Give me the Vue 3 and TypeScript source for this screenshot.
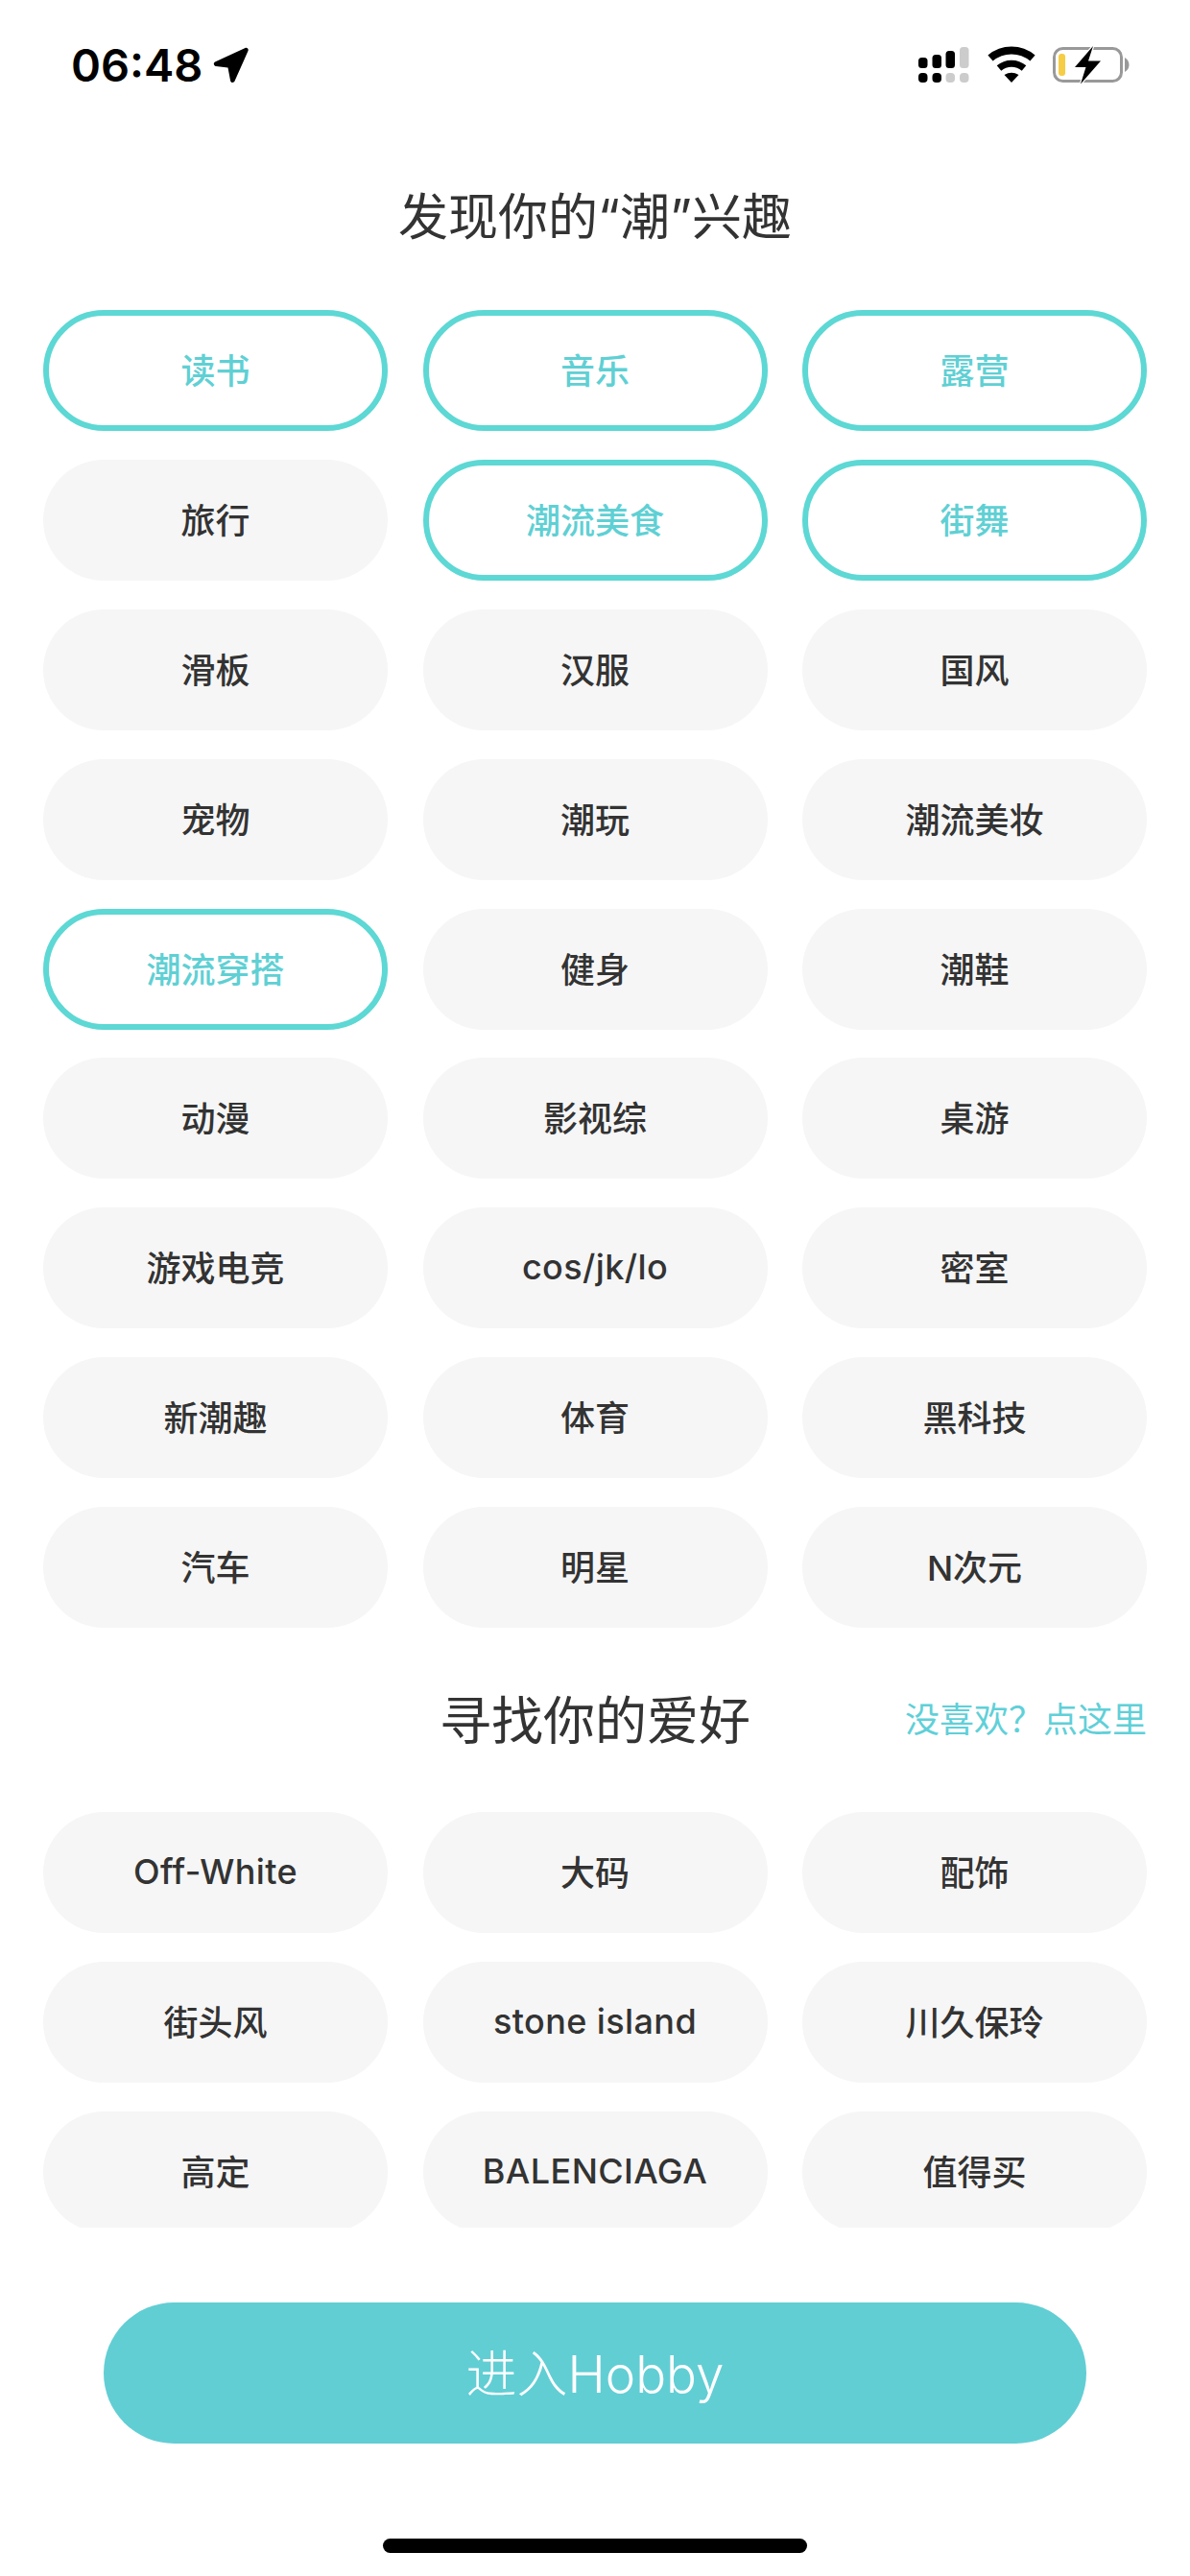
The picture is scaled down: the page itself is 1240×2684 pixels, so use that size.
<script setup lang="ts">
interface Tag {
  label: string
  on?: boolean
  latin?: boolean
}

const interests: Tag[] = [
  { label: '读书', on: true }, { label: '音乐', on: true }, { label: '露营', on: true },
  { label: '旅行' }, { label: '潮流美食', on: true }, { label: '街舞', on: true },
  { label: '滑板' }, { label: '汉服' }, { label: '国风' },
  { label: '宠物' }, { label: '潮玩' }, { label: '潮流美妆' },
  { label: '潮流穿搭', on: true }, { label: '健身' }, { label: '潮鞋' },
  { label: '动漫' }, { label: '影视综' }, { label: '桌游' },
  { label: '游戏电竞' }, { label: 'cos/jk/lo', latin: true }, { label: '密室' },
  { label: '新潮趣' }, { label: '体育' }, { label: '黑科技' },
  { label: '汽车' }, { label: '明星' }, { label: 'N次元' },
]

const hobbies: Tag[] = [
  { label: 'Off-White', latin: true }, { label: '大码' }, { label: '配饰' },
  { label: '街头风' }, { label: 'stone island', latin: true }, { label: '川久保玲' },
  { label: '高定' }, { label: 'BALENCIAGA', latin: true }, { label: '值得买' },
]
</script>

<template>
  <div class="page">
    <header class="status">
      <div class="clock">
        <span class="time">06:48</span>
        <svg class="arrow" viewBox="0 0 38 38" width="38" height="38">
          <path d="M2 15.500 33.500 1c2-.8 3.800 1 3 3L22.500 35.500c-.9 2.100-3.900 1.900-4.400-.3L15.500 21.500 3 20c-2.400-.4-3-3.400-1-4.500z" fill="#000" />
        </svg>
      </div>
      <svg class="indicators" viewBox="950 45 230 45" width="230" height="45">
        <rect x="957" y="60" width="9.500" height="11" rx="3.500" fill="#000" />
        <rect x="971.500" y="57" width="9.500" height="14" rx="3.500" fill="#000" />
        <rect x="985.500" y="53" width="9.500" height="18" rx="3.500" fill="#000" />
        <rect x="1000" y="49" width="9.500" height="22" rx="3.500" fill="#ccc" />
        <rect x="957" y="76" width="9.500" height="10" rx="4" fill="#000" />
        <rect x="971.500" y="76" width="9.500" height="10" rx="4" fill="#000" />
        <rect x="985.500" y="76" width="9.500" height="10" rx="4" fill="#ccc" />
        <rect x="1000" y="76" width="9.500" height="10" rx="4" fill="#ccc" />
        <path d="M1032 60.500A34 34 0 0 1 1076 60.500" fill="none" stroke="#000" stroke-width="8" />
        <path d="M1041 71A20 20 0 0 1 1067 71" fill="none" stroke="#000" stroke-width="7" />
        <path d="M1046.500 78Q1054 73.500 1061.500 78L1054 86Z" fill="#000" />
        <rect x="1098.500" y="50.500" width="70" height="34" rx="9" fill="none" stroke="#999" stroke-width="3" />
        <path d="M1172 60q4.500 2.500 4.500 7.500t-4.500 7.500z" fill="#999" />
        <rect x="1103" y="56" width="7" height="23" rx="3" fill="#f6cd44" />
        <path d="M1139 48 1120 70h11.500l-5.500 17.500 21-24h-13z" fill="#000" stroke="#fff" stroke-width="2.500" paint-order="stroke" />
      </svg>
    </header>

    <h1 class="title">发现你的“潮”兴趣</h1>

    <div class="tags">
      <div v-for="tag in interests" :key="tag.label" class="tag" :class="{ on: tag.on, latin: tag.latin }">{{ tag.label }}</div>
    </div>

    <div class="head">
      <span></span>
      <h2 class="subtitle">寻找你的爱好</h2>
      <span class="skip">没喜欢？点这里</span>
    </div>

    <div class="tags clipped">
      <div v-for="tag in hobbies" :key="tag.label" class="tag" :class="{ latin: tag.latin }">{{ tag.label }}</div>
    </div>

    <button class="enter" type="button">进入Hobby</button>

    <div class="home"></div>
  </div>
</template>

<style>
html, body {
  margin: 0;
  background: #fff;
}
</style>

<style scoped>
.page {
  width: 1240px;
  height: 2684px;
  overflow: hidden;
  background: #fff;
  font-family: Inter, "Noto Sans CJK SC", sans-serif;
  color: #333;
}
.status {
  height: 100px;
  box-sizing: border-box;
  padding: 45px 60px 0 74px;
  display: flex;
  justify-content: space-between;
  align-items: flex-start;
}
.clock {
  display: flex;
  align-items: center;
  gap: 11px;
  height: 45px;
}
.time {
  font-size: 47px;
  font-weight: 600;
  color: #000;
  line-height: 45px;
}
.indicators {
  display: block;
}
.title {
  margin: 77px 0 46px;
  height: 100px;
  line-height: 100px;
  text-align: center;
  font-size: 52px;
  font-weight: 400;
}
.tags {
  margin: 0 45px;
  display: grid;
  grid-template-columns: repeat(3, 359px);
  justify-content: space-between;
  row-gap: 29.875px;
}
.tags.clipped {
  height: 433px;
  overflow: hidden;
}
.tag {
  height: 126px;
  box-sizing: border-box;
  padding-bottom: 4px;
  border-radius: 63px;
  background: #f6f6f6;
  display: flex;
  align-items: center;
  justify-content: center;
  font-size: 36px;
  font-weight: 500;
  color: #333;
}
.tag.latin {
  padding-bottom: 2px;
  font-weight: 450;
  letter-spacing: 0.4px;
}
.tag.on {
  background: #fff;
  border: 6px solid #5dd8d4;
  color: #5fd0d4;
}
.head {
  margin: 43px 45px 49px;
  height: 100px;
  display: grid;
  grid-template-columns: 1fr auto 1fr;
  align-items: center;
}
.subtitle {
  margin: 0;
  font-size: 54px;
  font-weight: 400;
}
.skip {
  justify-self: end;
  font-size: 36px;
  color: #5fd0d8;
  white-space: nowrap;
}
.enter {
  display: block;
  margin: 78px 108px 0;
  width: 1024px;
  height: 147px;
  padding: 0 0 5px;
  border: 0;
  border-radius: 74px;
  background: #61ced4;
  color: #fff;
  font-family: inherit;
  font-size: 53px;
  font-weight: 300;
}
.home {
  margin: 99px auto 0;
  width: 442px;
  height: 15px;
  border-radius: 8px;
  background: #000;
}
</style>
